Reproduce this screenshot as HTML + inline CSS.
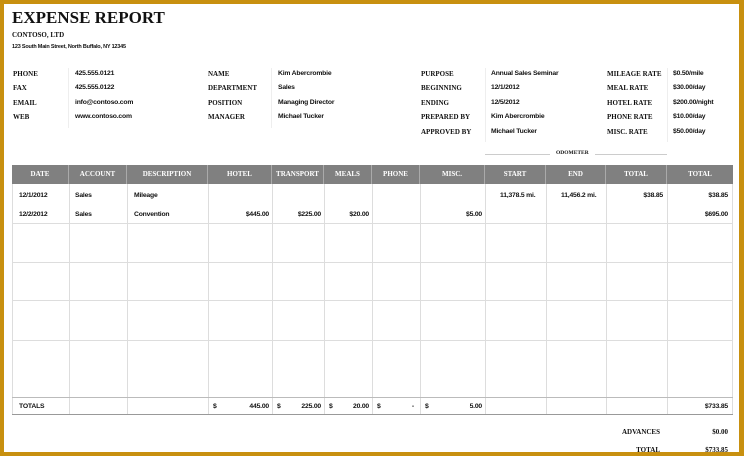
<!DOCTYPE html><html><head><style>
body{margin:0;width:744px;height:456px;overflow:hidden;background:#c8900f;position:relative;font-family:"Liberation Sans",sans-serif}
#p{position:absolute;left:4px;top:4px;width:735px;height:448px;background:#fff;overflow:hidden}
.a{position:absolute;white-space:nowrap;font-size:6.8px;font-weight:bold;color:#111;letter-spacing:-0.2px}
.s{font-family:"Liberation Serif",serif;font-size:7px;font-weight:bold;letter-spacing:0}
.h{position:absolute;top:161px;height:19px;background:#808080;color:#fff;font-family:"Liberation Serif",serif;font-weight:bold;font-size:7px;line-height:19px;text-align:center;border-right:1px solid #aaa;box-sizing:border-box}
.v{position:absolute;width:1px;background:#ddd;top:180px;height:230px}
.hl{position:absolute;left:8px;width:721px;height:1px;background:#ddd}
.r{text-align:right}
</style></head><body><div id="p">
<div class="a" style="left:8px;top:4px;font-family:'Liberation Serif',serif;font-size:17px;letter-spacing:0">EXPENSE REPORT</div>
<div class="a s" style="left:8px;top:27px;font-size:7px">CONTOSO, LTD</div>
<div class="a" style="left:8px;top:40px;font-size:5.5px">123 South Main Street, North Buffalo, NY 12345</div>

<div class="a s" style="left:9px;top:66px">PHONE</div><div class="a" style="left:71px;top:66px">425.555.0121</div>
<div class="a s" style="left:9px;top:80px">FAX</div><div class="a" style="left:71px;top:80px">425.555.0122</div>
<div class="a s" style="left:9px;top:95px">EMAIL</div><div class="a" style="left:71px;top:95px">info@contoso.com</div>
<div class="a s" style="left:9px;top:109px">WEB</div><div class="a" style="left:71px;top:109px">www.contoso.com</div>
<div style="position:absolute;left:64px;top:64px;width:1px;height:60px;background:#eee"></div>

<div class="a s" style="left:204px;top:66px">NAME</div><div class="a" style="left:274px;top:66px">Kim Abercrombie</div>
<div class="a s" style="left:204px;top:80px">DEPARTMENT</div><div class="a" style="left:274px;top:80px">Sales</div>
<div class="a s" style="left:204px;top:95px">POSITION</div><div class="a" style="left:274px;top:95px">Managing Director</div>
<div class="a s" style="left:204px;top:109px">MANAGER</div><div class="a" style="left:274px;top:109px">Michael Tucker</div>
<div style="position:absolute;left:267px;top:64px;width:1px;height:60px;background:#eee"></div>

<div class="a s" style="left:417px;top:66px">PURPOSE</div><div class="a" style="left:487px;top:66px">Annual Sales Seminar</div>
<div class="a s" style="left:417px;top:80px">BEGINNING</div><div class="a" style="left:487px;top:80px">12/1/2012</div>
<div class="a s" style="left:417px;top:95px">ENDING</div><div class="a" style="left:487px;top:95px">12/5/2012</div>
<div class="a s" style="left:417px;top:109px">PREPARED BY</div><div class="a" style="left:487px;top:109px">Kim Abercrombie</div>
<div class="a s" style="left:417px;top:124px">APPROVED BY</div><div class="a" style="left:487px;top:124px">Michael Tucker</div>
<div style="position:absolute;left:481px;top:64px;width:1px;height:74px;background:#eee"></div>

<div class="a s" style="left:603px;top:66px">MILEAGE RATE</div><div class="a" style="left:669px;top:66px">$0.50/mile</div>
<div class="a s" style="left:603px;top:80px">MEAL RATE</div><div class="a" style="left:669px;top:80px">$30.00/day</div>
<div class="a s" style="left:603px;top:95px">HOTEL RATE</div><div class="a" style="left:669px;top:95px">$200.00/night</div>
<div class="a s" style="left:603px;top:109px">PHONE RATE</div><div class="a" style="left:669px;top:109px">$10.00/day</div>
<div class="a s" style="left:603px;top:124px">MISC. RATE</div><div class="a" style="left:669px;top:124px">$50.00/day</div>
<div style="position:absolute;left:663px;top:64px;width:1px;height:74px;background:#eee"></div>

<div style="position:absolute;left:481px;top:150px;width:182px;height:1px;background:#ccc"></div>
<div class="a s" style="left:546px;top:146px;font-size:5.5px;background:#fff;padding:0 6px">ODOMETER</div>

<div class="h" style="left:8px;width:57px">DATE</div>
<div class="h" style="left:65px;width:58px">ACCOUNT</div>
<div class="h" style="left:123px;width:81px">DESCRIPTION</div>
<div class="h" style="left:204px;width:64px">HOTEL</div>
<div class="h" style="left:268px;width:52px">TRANSPORT</div>
<div class="h" style="left:320px;width:48px">MEALS</div>
<div class="h" style="left:368px;width:48px">PHONE</div>
<div class="h" style="left:416px;width:65px">MISC.</div>
<div class="h" style="left:481px;width:61px">START</div>
<div class="h" style="left:542px;width:60px">END</div>
<div class="h" style="left:602px;width:61px">TOTAL</div>
<div class="h" style="left:663px;width:66px;border-right:0">TOTAL</div>

<div class="v" style="left:8px"></div><div class="v" style="left:65px"></div><div class="v" style="left:123px"></div><div class="v" style="left:204px"></div><div class="v" style="left:268px"></div><div class="v" style="left:320px"></div><div class="v" style="left:368px"></div><div class="v" style="left:416px"></div><div class="v" style="left:481px"></div><div class="v" style="left:542px"></div><div class="v" style="left:602px"></div><div class="v" style="left:663px"></div><div class="v" style="left:728px"></div>
<div class="hl" style="top:219px"></div><div class="hl" style="top:258px"></div><div class="hl" style="top:296px"></div><div class="hl" style="top:336px"></div><div class="hl" style="top:393px;background:#bbb"></div><div class="hl" style="top:410px;background:#999"></div>

<div class="a" style="left:15px;top:188px">12/1/2012</div><div class="a" style="left:71px;top:188px">Sales</div><div class="a" style="left:130px;top:188px">Mileage</div>
<div class="a" style="left:496px;top:188px">11,378.5 mi.</div><div class="a" style="left:557px;top:188px">11,456.2 mi.</div>
<div class="a r" style="right:76px;top:188px">$38.85</div><div class="a r" style="right:11px;top:188px">$38.85</div>
<div class="a" style="left:15px;top:207px">12/2/2012</div><div class="a" style="left:71px;top:207px">Sales</div><div class="a" style="left:130px;top:207px">Convention</div>
<div class="a r" style="right:470px;top:207px">$445.00</div><div class="a r" style="right:418px;top:207px">$225.00</div><div class="a r" style="right:370px;top:207px">$20.00</div><div class="a r" style="right:257px;top:207px">$5.00</div><div class="a r" style="right:11px;top:207px">$695.00</div>

<div class="a" style="left:15px;top:399px">TOTALS</div>
<div class="a" style="left:209px;top:399px">$</div><div class="a r" style="right:470px;top:399px">445.00</div>
<div class="a" style="left:273px;top:399px">$</div><div class="a r" style="right:418px;top:399px">225.00</div>
<div class="a" style="left:325px;top:399px">$</div><div class="a r" style="right:370px;top:399px">20.00</div>
<div class="a" style="left:373px;top:399px">$</div><div class="a r" style="right:325px;top:399px">-</div>
<div class="a" style="left:421px;top:399px">$</div><div class="a r" style="right:257px;top:399px">5.00</div>
<div class="a r" style="right:11px;top:399px">$733.85</div>

<div class="a s r" style="right:79px;top:424px">ADVANCES</div><div class="a s r" style="right:11px;top:424px">$0.00</div>
<div class="a s r" style="right:79px;top:442px">TOTAL</div><div class="a s r" style="right:11px;top:442px">$733.85</div>
</div></body></html>
